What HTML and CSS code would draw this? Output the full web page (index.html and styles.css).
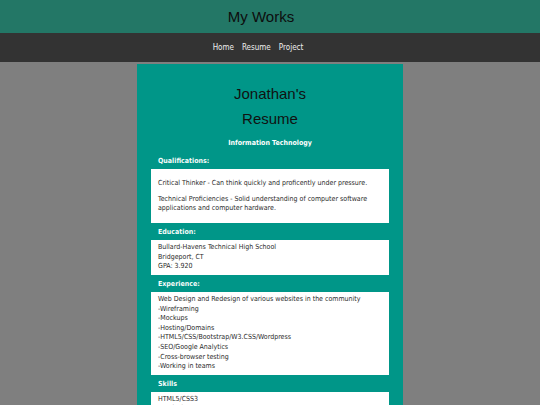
FILE: index.html
```html
<!DOCTYPE html>
<html>
<head>
<meta charset="utf-8">
<link rel="stylesheet" href="styles.css">
</head>
<body>
<header class="top">
  <h1 class="brand">My Works</h1>
</header>
<nav class="nav">
  <a href="#">Home</a>
  <a href="#">Resume</a>
  <a href="#">Project</a>
</nav>
<main class="page">
  <section class="card">
    <h2 class="title">Jonathan's<br>Resume</h2>
    <p class="sub">Information Technology</p>
    <h3 class="label">Qualifications:</h3>
    <div class="box">
      <p>Critical Thinker - Can think quickly and proficently under pressure.</p>
      <p>Technical Proficiencies - Solid understanding of computer software applications and computer hardware.</p>
    </div>
    <h3 class="label">Education:</h3>
    <div class="box">
      Bullard-Havens Technical High School<br>
      Bridgeport, CT<br>
      GPA: 3.920
    </div>
    <h3 class="label">Experience:</h3>
    <div class="box">
      Web Design and Redesign of various websites in the community<br>
      -Wireframing<br>
      -Mockups<br>
      -Hosting/Domains<br>
      -HTML5/CSS/Bootstrap/W3.CSS/Wordpress<br>
      -SEO/Google Analytics<br>
      -Cross-browser testing<br>
      -Working in teams
    </div>
    <h3 class="label">Skills</h3>
    <div class="box">
      HTML5/CSS3<br>
      JavaScript<br>
      Bootstrap
    </div>
  </section>
</main>
</body>
</html>
```
FILE: styles.css
```css
html, body {
  margin: 0;
  padding: 0;
}
body {
  background: #7f7f7f;
  font-family: "DejaVu Sans Condensed", "DejaVu Sans", sans-serif;
  overflow: hidden;
  height: 405px;
}
.top {
  background: #237766;
  height: 33px;
  display: flex;
  align-items: center;
  justify-content: center;
  padding-right: 18px;
}
.brand {
  margin: 0;
  font-family: "Liberation Sans", Arial, sans-serif;
  font-weight: normal;
  font-size: 15px;
  color: #0d0d0d;
}
.nav {
  background: #333333;
  height: 29px;
  display: flex;
  align-items: center;
  justify-content: center;
  gap: 8px;
  padding-right: 24px;
}
.nav a {
  color: #eeeeee;
  text-decoration: none;
  font-size: 8px;
}
.page {
  display: flex;
  justify-content: center;
  padding-top: 2px;
}
.card {
  width: 266px;
  background: #009688;
  padding: 18px 14px 10px;
  box-sizing: border-box;
}
.title {
  margin: 0;
  text-align: center;
  font-family: "Liberation Sans", Arial, sans-serif;
  font-weight: normal;
  font-size: 15px;
  line-height: 24.5px;
  color: #111;
}
.sub {
  margin: 7px 0 4px;
  text-align: center;
  color: #fff;
  font-weight: bold;
  font-size: 7px;
  line-height: 10px;
}
.label {
  margin: 0;
  padding: 4px 7px 3px;
  color: #f6fcfb;
  font-weight: bold;
  font-size: 7px;
  line-height: 10px;
}
.box {
  background: #fff;
  color: #2a2a2a;
  font-size: 7px;
  line-height: 9.6px;
  padding: 3px 7px;
}
.box p {
  margin: 6.5px 0;
}
```
